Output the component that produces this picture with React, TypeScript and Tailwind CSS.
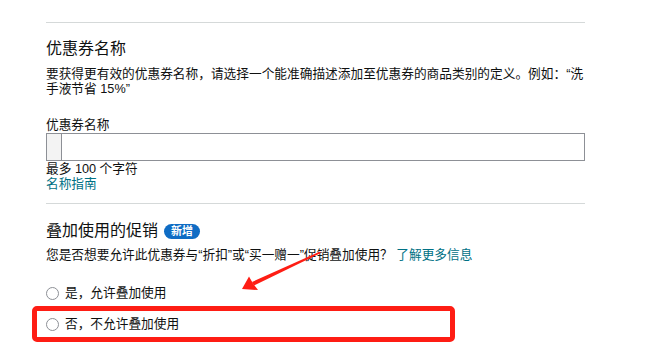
const Radio = ({ label }: { label: string }) => (
  <label className="flex items-center h-[15px]">
    <span className="w-[13px] h-[13px] rounded-full border border-[#8d9096] bg-white shrink-0" />
    <span className="ml-[6px] text-[12.7px] leading-[15px]">{label}</span>
  </label>
);

export default function App() {
  return (
    <div className="relative w-[658px] h-[348px] bg-white overflow-hidden font-['Liberation_Sans','Noto_Sans_CJK_SC',sans-serif] text-[#0f1111]">
      <div className="ml-[46px] w-[539px] pt-[22px]">
        <div className="h-px bg-[#d5d9d9]" />

        <h2 className="mt-[16px] text-[16px] leading-[20px]">优惠券名称</h2>
        <p className="mt-[8px] text-[12.7px] leading-[15px]">
          要获得更有效的优惠券名称，请选择一个能准确描述添加至优惠券的商品类别的定义。例如：“洗手液节省 15%”
        </p>

        <div className="mt-[21px] text-[12.7px] leading-[15px]">优惠券名称</div>
        <div className="flex h-[28px] border border-[#8d9096]">
          <div className="w-[15px] bg-[#f3f3f3] border-r border-[#8d9096]" />
        </div>
        <div className="mt-[1px] text-[12.7px] leading-[15px]">最多 100 个字符</div>
        <a href="#" className="block text-[12.7px] leading-[15px] text-[#007185]">
          名称指南
        </a>

        <div className="mt-[11px] h-px bg-[#d5d9d9]" />

        <div className="mt-[17px] flex items-center h-[20px]">
          <h2 className="text-[16px] leading-[20px]">叠加使用的促销</h2>
          <span className="ml-[6px] flex items-center justify-center w-[36px] h-[15px] rounded-full bg-[#0f6cc4] text-white text-[11px] font-bold leading-none">
            新增
          </span>
        </div>
        <p className="mt-[7px] text-[12.7px] leading-[15px]">
          您是否想要允许此优惠券与“折扣”或“买一赠一”促销叠加使用？{" "}
          <a href="#" className="text-[#007185]">了解更多信息</a>
        </p>

        <div className="mt-[23px] flex flex-col gap-[16px]">
          <Radio label="是，允许叠加使用" />
          <Radio label="否，不允许叠加使用" />
        </div>
      </div>

      {/* annotation overlay */}
      <div className="absolute left-[32px] top-[306px] w-[423px] h-[36px] border-[5px] border-[#fe1d14] rounded-[5px]" />
      <svg className="absolute inset-0 pointer-events-none" width="658" height="348" viewBox="0 0 658 348">
        <polygon points="320,251.5 320.8,253 254,285.5 252,282" fill="#fe1d14" />
        <polygon points="242,289 249,276.5 253,283.5 258,290" fill="#fe1d14" />
      </svg>
    </div>
  );
}
